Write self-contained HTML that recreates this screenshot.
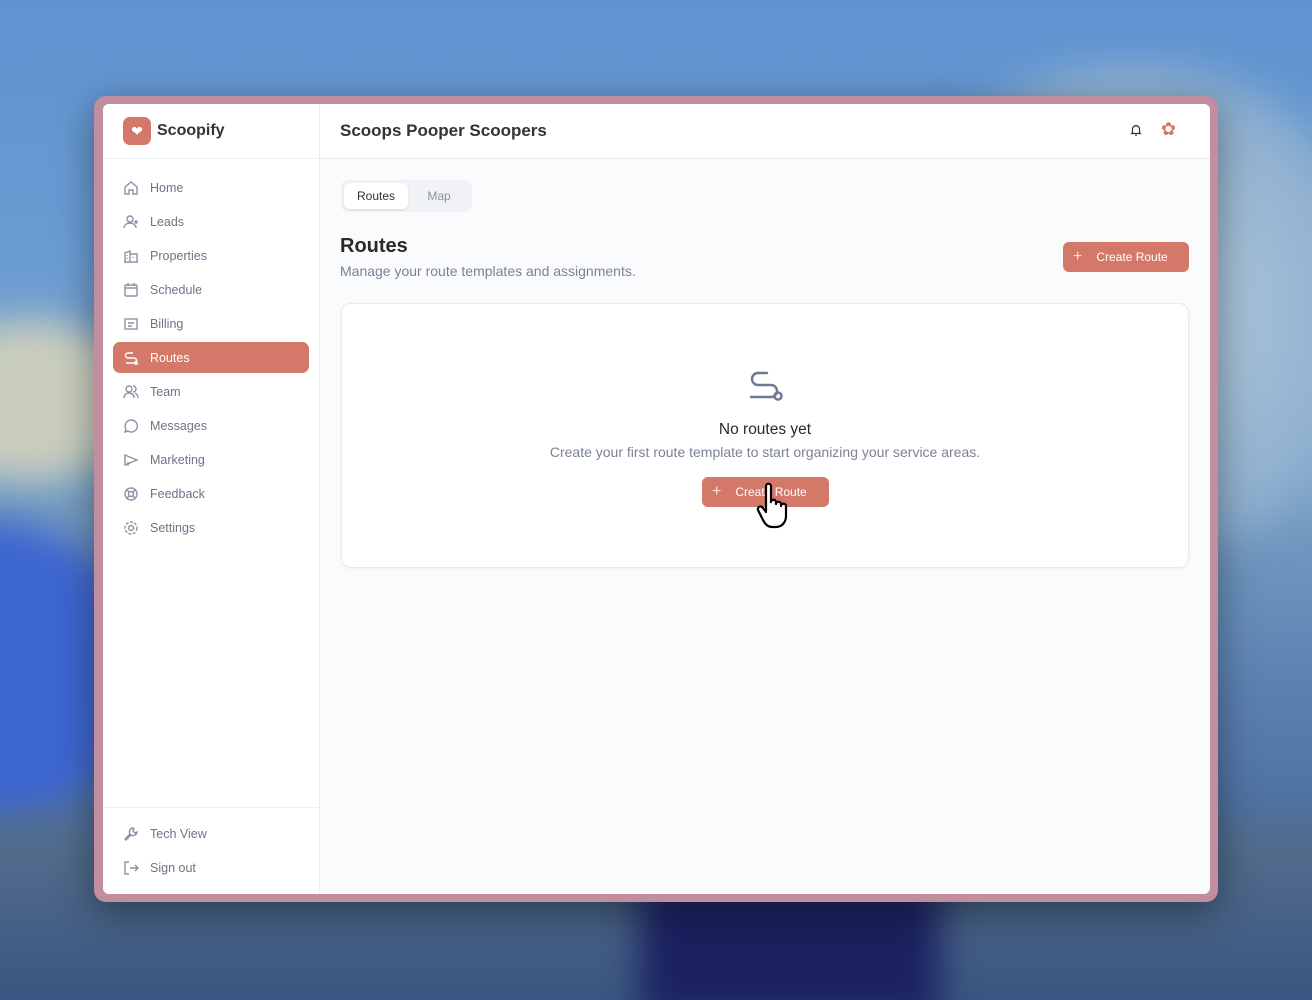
<!DOCTYPE html>
<html><head><meta charset="utf-8"><style>
*{box-sizing:border-box;margin:0;padding:0}
html,body{width:1312px;height:1000px;overflow:hidden}
body{font-family:"Liberation Sans",sans-serif;position:relative;
background:linear-gradient(180deg,#5f93d0 0%,#6a9cd3 25%,#7ea6c8 45%,#5a7fb0 70%,#3a5a8c 100%);}
.b{position:absolute;filter:blur(18px)}
.bg1{left:-160px;top:520px;width:300px;height:300px;border-radius:50%;background:#3d66d0}
.bg5{left:-80px;top:320px;width:220px;height:160px;border-radius:50%;background:#c9cdbd}
.bg2{left:-60px;top:820px;width:1450px;height:220px;background:linear-gradient(180deg,#56708e,#34507e)}
.bg3{left:640px;top:880px;width:300px;height:140px;background:#1b2160}
.bg4{right:-100px;top:60px;width:560px;height:500px;border-radius:50%;background:radial-gradient(circle,#b9cedf,#8fb0cf 60%,transparent 72%)}
.frame{position:absolute;left:94px;top:96px;width:1124px;height:806px;background:#c08e9e;border-radius:12px;box-shadow:0 10px 40px rgba(0,0,0,.4)}
.app{position:absolute;left:103px;top:104px;width:1107px;height:790px;background:#fafbfd;border-radius:6px;overflow:hidden}
.side{position:absolute;left:0;top:0;width:217px;height:790px;background:#fff;border-right:1px solid #eceef2}
.logo{height:55px;border-bottom:1px solid #eceef2;display:flex;align-items:center;padding-left:20px}
.lg{width:28px;height:28px;background:#d4786a;border-radius:7px;display:flex;align-items:center;justify-content:center;color:#fff;font-size:14px}
.logo b{font-size:16px;color:#333;margin-left:6px}
.nav{padding-top:13px}
.it{height:31px;margin:0 10px 3px;border-radius:7px;display:flex;align-items:center;padding-left:10px;font-size:12.5px;color:#6b7486}
.it svg{width:16px;height:16px;margin-right:11px;stroke:#8a93a5;fill:none;stroke-width:1.4}
.it.on{background:#d4786a;color:#fff}.it.on svg{stroke:#fff}
.bot{position:absolute;bottom:0;left:0;width:216px;height:87px;border-top:1px solid #eceef2;padding-top:10px}
.top{position:absolute;left:217px;top:0;right:0;height:55px;background:#fff;border-bottom:1px solid #eceef2;display:flex;align-items:center;padding-left:20px}
.top b{font-size:17px;color:#333}
.tabs{position:absolute;left:238px;top:76px;width:131px;height:32px;background:#f0f2f5;border-radius:7px;padding:3px}
.tab{position:absolute;top:3px;height:26px;font-size:12px;display:flex;align-items:center;justify-content:center}
.btn{position:absolute;background:#d4786a;color:#fff;border-radius:6px;font-size:12px;display:flex;align-items:center}
.card{position:absolute;left:238px;top:199px;width:848px;height:265px;background:#fff;border:1px solid #e8eaee;border-radius:10px;box-shadow:0 1px 3px rgba(0,0,0,.05)}
</style></head><body>
<div class="b bg4"></div><div class="b bg5"></div><div class="b bg1"></div><div class="b bg2"></div><div class="b bg3"></div>
<div class="frame"></div>
<div class="app">
 <div class="side">
  <div class="logo"><div class="lg">❤</div><b>Scoopify</b></div>
  <div class="nav">
   <div class="it"><svg viewBox="0 0 16 16"><path d="M2 7l6-5 6 5v7H10V10H6v4H2z"/></svg>Home</div>
   <div class="it"><svg viewBox="0 0 16 16"><circle cx="7" cy="5" r="3"/><path d="M1 14c0-3 3-5 6-5s6 2 6 5M13 6v4M11 8h4"/></svg>Leads</div>
   <div class="it"><svg viewBox="0 0 16 16"><path d="M2 14V5l5-2v11M7 6h7v8M1 14h14M4 7v1M4 10v1M10 9v1"/></svg>Properties</div>
   <div class="it"><svg viewBox="0 0 16 16"><rect x="2" y="3" width="12" height="11" rx="1"/><path d="M2 6h12M5 1v3M11 1v3"/></svg>Schedule</div>
   <div class="it"><svg viewBox="0 0 16 16"><rect x="2" y="3" width="12" height="10"/><path d="M5 7h6M5 10h4"/></svg>Billing</div>
   <div class="it on"><svg viewBox="0 0 16 16"><path d="M10 3H5a2.5 2.5 0 000 5h6a2.5 2.5 0 010 5H3"/><circle cx="13" cy="13" r="1.3"/></svg>Routes</div>
   <div class="it"><svg viewBox="0 0 16 16"><circle cx="6" cy="5" r="3"/><path d="M1 14c0-3 2-5 5-5s5 2 5 5M10 2a3 3 0 010 6M12 9c2 1 3 3 3 5"/></svg>Team</div>
   <div class="it"><svg viewBox="0 0 16 16"><path d="M8 2a6 6 0 00-5 9l-1 3 3-1a6 6 0 103-11z"/></svg>Messages</div>
   <div class="it"><svg viewBox="0 0 16 16"><path d="M2 3l12 5-12 5zM5 10v4"/></svg>Marketing</div>
   <div class="it"><svg viewBox="0 0 16 16"><circle cx="8" cy="8" r="6"/><circle cx="8" cy="8" r="2.5"/><path d="M4 4l2 2M12 4l-2 2M4 12l2-2M12 12l-2-2"/></svg>Feedback</div>
   <div class="it"><svg viewBox="0 0 16 16"><circle cx="8" cy="8" r="2.5"/><circle cx="8" cy="8" r="6" stroke-dasharray="3 1.5"/></svg>Settings</div>
  </div>
  <div class="bot">
   <div class="it"><svg viewBox="0 0 16 16"><path d="M10 2a4 4 0 00-3 6L2 13l1 1 5-5a4 4 0 006-3l-2 1-2-2 1-2z"/></svg>Tech View</div>
   <div class="it"><svg viewBox="0 0 16 16"><path d="M6 2H2v12h4M7 8h8M12 5l3 3-3 3"/></svg>Sign out</div>
  </div>
 </div>
 <div class="top"><b>Scoops Pooper Scoopers</b>
  <svg style="position:absolute;left:809px;top:19px" width="14" height="14" viewBox="0 0 16 16" fill="none" stroke="#333" stroke-width="1.4"><path d="M4 11V7a4 4 0 018 0v4l1 1H3zM7 14h2"/></svg>
  <div style="position:absolute;left:841px;top:15px;width:26px;height:20px;color:#d4786a;font-size:18px">✿</div>
 </div>
 <div class="tabs"><div class="tab" style="left:3px;width:64px;background:#fff;border-radius:5px;box-shadow:0 1px 2px rgba(0,0,0,.1);color:#333">Routes</div><div class="tab" style="left:70px;width:56px;color:#8a93a5">Map</div></div>
 <div style="position:absolute;left:237px;top:131px;font-size:20px;font-weight:bold;color:#2a2a2a">Routes</div>
 <div style="position:absolute;left:237px;top:159px;font-size:14px;color:#7a8294">Manage your route templates and assignments.</div>
 <div class="btn" style="left:960px;top:138px;width:126px;height:30px;padding-left:10px"><span style="font-size:16px;opacity:.8;margin-right:14px">+</span>Create Route</div>
 <div class="card">
  <svg style="position:absolute;left:405px;top:66px" width="36" height="32" viewBox="0 0 36 32" fill="none" stroke="#6b7a93" stroke-width="2.4" stroke-linecap="round"><path d="M20 3H11a6 6 0 000 12h13a6 6 0 010 12H4"/><circle cx="31" cy="26" r="3.5"/></svg>
  <div style="position:absolute;left:0;right:0;top:117px;text-align:center;font-size:15.5px;color:#2a2a2a">No routes yet</div>
  <div style="position:absolute;left:0;right:0;top:140px;text-align:center;font-size:14px;color:#7a8294">Create your first route template to start organizing your service areas.</div>
  <div class="btn" style="left:360px;top:173px;width:127px;height:30px;padding-left:10px"><span style="font-size:16px;opacity:.8;margin-right:14px">+</span>Create Route</div>
  <svg style="position:absolute;left:414px;top:178px" width="38" height="48" viewBox="0 0 38 48"><path d="M10 4c0-3 5-3 5 0v16c0-3 5-3 5 0v2c0-3 5-3 5 0v2c0-3 5-3 5 0v10c0 6-4 11-10 11h-4c-4 0-7-3-9-7l-5-10c-1-3 3-5 5-2l3 4z" fill="#fff" stroke="#000" stroke-width="2.2" stroke-linejoin="round"/></svg>
 </div>
</div>
</body></html>
